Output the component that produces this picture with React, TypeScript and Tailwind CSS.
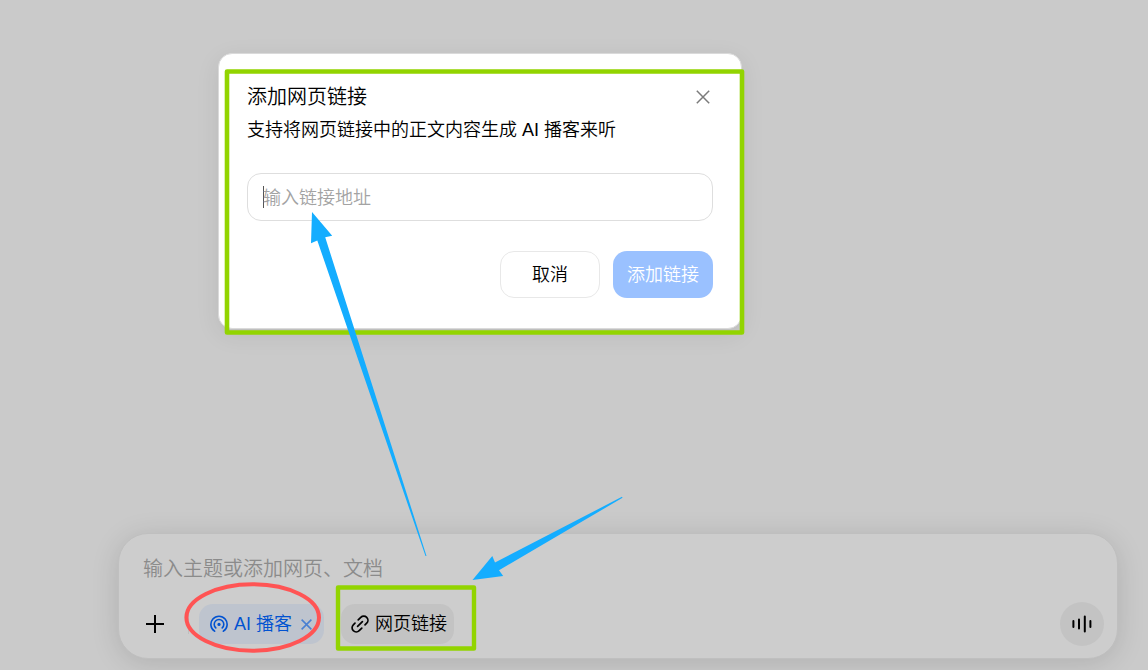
import React, { useState } from "react";

function CloseIcon({ className }: { className: string }) {
  return (
    <svg viewBox="0 0 14 14" className={className} fill="none" stroke="currentColor" aria-hidden="true">
      <path d="M0.8 0.8 13.2 13.2M13.2 0.8 0.8 13.2" />
    </svg>
  );
}

function PodcastIcon() {
  return (
    <svg viewBox="0 0 18 18" className="size-[18px]" fill="none" stroke="currentColor" strokeWidth="1.6" strokeLinecap="round" aria-hidden="true">
      <path d="M4.6 16.2A8.1 8.1 0 1 1 13.4 16.2" />
      <path d="M5.8 12.9A4.8 4.8 0 1 1 12.2 12.9" />
      <circle cx="9" cy="9.4" r="1.6" fill="currentColor" stroke="none" />
    </svg>
  );
}

function LinkIcon() {
  return (
    <svg viewBox="0 0 18 18" className="size-[18px]" fill="none" stroke="currentColor" strokeWidth="1.7" strokeLinecap="round" aria-hidden="true">
      <path d="M6.6 11.4 11.4 6.6" />
      <path d="M7.2 4.9 9.8 2.3A4.1 4.1 0 0 1 15.7 8.2L14 9.9" />
      <path d="M10.8 13.1 8.2 15.7A4.1 4.1 0 0 1 2.3 9.8L4 8.1" />
    </svg>
  );
}

function Composer() {
  return (
    <section className="flex flex-col rounded-[30px] border border-[#bfbfbf] bg-[#cdcdcd] px-6 pb-3 pt-[18px] shadow-[0_4px_28px_rgba(0,0,0,0.13)]">
      <input
        aria-label="主题"
        placeholder="输入主题或添加网页、文档"
        className="h-[34px] w-full bg-transparent text-xl text-black outline-none placeholder:text-[#8b8b8b]"
      />
      <div className="mt-4 flex h-11 items-center">
        <button aria-label="添加" className="mr-[21px] flex size-6 shrink-0 items-center justify-center">
          <svg viewBox="0 0 18 18" className="size-[18px]" stroke="#000" strokeWidth="2" aria-hidden="true">
            <path d="M9 0v18M0 9h18" />
          </svg>
        </button>
        <span className="h-5 w-px bg-[#bfbfbf]" />
        <div className="ml-[10px] flex h-10 w-[125px] shrink-0 items-center rounded-[14px] bg-[#bec4ce] pl-[11px] text-[#0052d1]">
          <PodcastIcon />
          <span className="ml-[6px] whitespace-nowrap text-lg">AI 播客</span>
          <button aria-label="移除 AI 播客" className="ml-[9px] flex items-center text-[#4a80d2]">
            <CloseIcon className="size-[11px] stroke-[2]" />
          </button>
        </div>
        <button className="ml-[17px] flex h-10 w-[113px] shrink-0 items-center gap-[6px] whitespace-nowrap rounded-[14px] bg-[#c3c3c3] pl-[10px] text-lg text-black">
          <LinkIcon />
          网页链接
        </button>
        <button aria-label="语音" className="-mr-[11px] ml-auto flex size-11 shrink-0 items-center justify-center rounded-full bg-[#c3c3c3]">
          <svg viewBox="0 0 20 18" className="h-[18px] w-5" stroke="#000" strokeWidth="2" strokeLinecap="round" aria-hidden="true">
            <path d="M1.4 6v6M7 4.5v9M12.8 1.5v15M18.4 6v6" />
          </svg>
        </button>
      </div>
    </section>
  );
}

function LinkDialog() {
  const [url, setUrl] = useState("");
  return (
    <div
      role="dialog"
      aria-labelledby="dialog-title"
      className="w-[524px] max-w-full rounded-[14px] border border-[#dadada] bg-white px-7 pb-[30px] pt-[26px] shadow-[0_6px_24px_rgba(0,0,0,0.08)]"
    >
      <div className="flex items-center justify-between">
        <h2 id="dialog-title" className="text-xl leading-[34px]">添加网页链接</h2>
        <button aria-label="关闭" className="mr-[3px] text-[#7b7b7b]">
          <CloseIcon className="size-[14px] stroke-[1.5]" />
        </button>
      </div>
      <p className="whitespace-nowrap text-lg leading-8">支持将网页链接中的正文内容生成 AI 播客来听</p>
      <div className="mt-[27px] flex h-12 items-center rounded-[14px] border border-[#dedede] px-[15px]">
        <span className="-mr-px h-[22px] w-px bg-[#555555]" />
        <input
          aria-label="链接地址"
          value={url}
          onChange={(e) => setUrl(e.target.value)}
          placeholder="输入链接地址"
          className="h-full min-w-0 flex-1 bg-transparent pt-0.5 text-lg outline-none placeholder:text-[#a3a3a3]"
        />
      </div>
      <div className="mt-[30px] flex justify-end gap-[13px]">
        <button className="h-[47px] w-[100px] rounded-[14px] border border-[#e8e8e8] text-lg">取消</button>
        <button className="h-[47px] w-[100px] rounded-[14px] bg-[#9ac1ff] text-lg text-white">添加链接</button>
      </div>
    </div>
  );
}

function Annotations() {
  return (
    <svg className="pointer-events-none absolute left-0 top-0 h-[670px] w-[1148px]" fill="none" aria-hidden="true">
      <path d="M227 71.5H742V332.5H227Z" stroke="#92d400" strokeWidth="4.6" strokeLinejoin="round" />
      <path d="M338 587.5H474V648.5H338Z" stroke="#92d400" strokeWidth="4.4" strokeLinejoin="round" />
      <ellipse cx="252.7" cy="617.5" rx="66.3" ry="33.3" stroke="#ff5454" strokeWidth="4" />
      <g fill="#14adff">
        <path d="M312 212 332.2 235.8 325.2 237.2 426.5 556 425.5 556 317.3 240.5 311 243.3Z" />
        <path d="M472.5 580 492.3 556 495 562.4 622 496.8 622.5 497.8 499 570.2 503.2 576Z" />
      </g>
    </svg>
  );
}

export default function App() {
  return (
    <main className="relative flex min-h-screen flex-col justify-between overflow-hidden bg-[#cacaca] pb-[11px] pl-[118px] pr-[30px] pt-[53px] font-['Liberation_Sans','Noto_Sans_CJK_SC',sans-serif] font-[350] text-black">
      <div className="pl-[100px]">
        <LinkDialog />
      </div>
      <Composer />
      <Annotations />
    </main>
  );
}
